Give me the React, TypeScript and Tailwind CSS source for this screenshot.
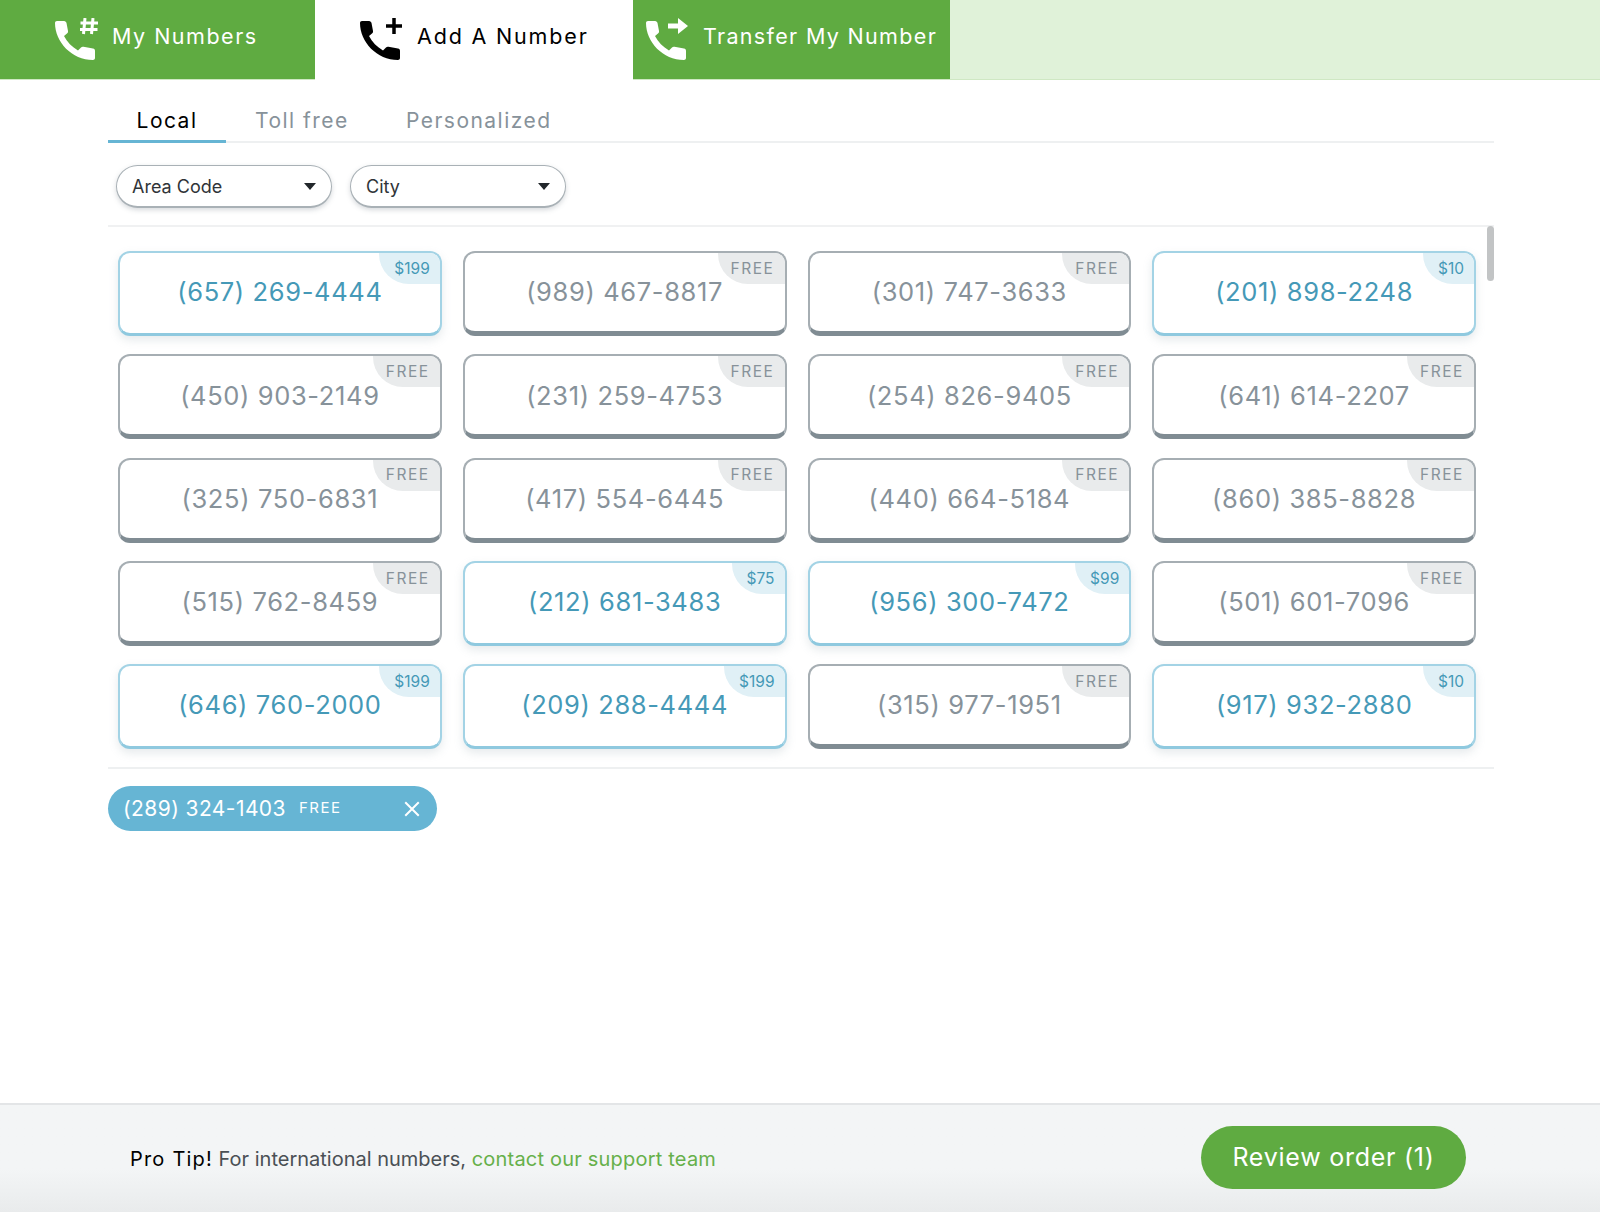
import React from "react";

// ============================================================================
// Data
// ============================================================================

type NumberItem = { phone: string; price: string };

const NUMBERS: NumberItem[] = [
    { phone: "(657) 269-4444", price: "$199" },
    { phone: "(989) 467-8817", price: "FREE" },
    { phone: "(301) 747-3633", price: "FREE" },
    { phone: "(201) 898-2248", price: "$10" },
    { phone: "(450) 903-2149", price: "FREE" },
    { phone: "(231) 259-4753", price: "FREE" },
    { phone: "(254) 826-9405", price: "FREE" },
    { phone: "(641) 614-2207", price: "FREE" },
    { phone: "(325) 750-6831", price: "FREE" },
    { phone: "(417) 554-6445", price: "FREE" },
    { phone: "(440) 664-5184", price: "FREE" },
    { phone: "(860) 385-8828", price: "FREE" },
    { phone: "(515) 762-8459", price: "FREE" },
    { phone: "(212) 681-3483", price: "$75" },
    { phone: "(956) 300-7472", price: "$99" },
    { phone: "(501) 601-7096", price: "FREE" },
    { phone: "(646) 760-2000", price: "$199" },
    { phone: "(209) 288-4444", price: "$199" },
    { phone: "(315) 977-1951", price: "FREE" },
    { phone: "(917) 932-2880", price: "$10" },
];

const HANDSET =
    "M2 3H9C10.500 3 11.200 4 11.500 5L13 13C13.200 14 12.800 15 12 15.600L9 18C12 24 17 29 23 32.500L26 29.500C26.800 28.800 27.500 28.500 28.500 28.800L38 30.500C39.300 30.800 40 31.600 40 33V40C40 41.300 39 42 38 42C17 42 0 24 0 5C0 3.800 .8 3 2 3Z";

// ============================================================================
// Components
// ============================================================================

function PhoneIcon({ kind }: { kind: "hash" | "plus" | "arrow" }): React.JSX.Element {
    return (
        <svg viewBox="0 0 44 44" className="w-[44px] h-[44px] fill-current shrink-0" aria-hidden="true">
            <path d={HANDSET} />
            {kind === "hash" && <path d="M30 0 28.500 16M38 0 36.500 16M25.500 5H43M25 11.500H42.500" stroke="currentColor" strokeWidth="3" fill="none" />}
            {kind === "plus" && <path d="M34 0V16M26 8H42" stroke="currentColor" strokeWidth="3.500" fill="none" />}
            {kind === "arrow" && <path d="M22 5.500H32V0L42 8 32 16V10.500H22Z" />}
        </svg>
    );
}

function TopTab({ label, kind, active, className }: { label: string; kind: "hash" | "plus" | "arrow"; active?: boolean; className: string }): React.JSX.Element {
    return (
        <div className={`flex items-center gap-[13px] text-[21.500px] ${active ? "h-[80px] bg-white text-black" : "h-[79px] bg-[#5fab41] text-white"} ${className}`}>
            <PhoneIcon kind={kind} />
            <span className={active ? "mt-[-7px]" : "mt-[-6px]"}>{label}</span>
        </div>
    );
}

function FilterSelect({ label }: { label: string }): React.JSX.Element {
    return (
        <div className="w-[216px] h-[43px] flex items-center justify-between px-[15px] rounded-full bg-white border border-[#a9b1b6] border-b-2 shadow-[0_2px_5px_rgba(120,130,140,0.3)] text-[18px] text-[#2f3438]">
            <span>{label}</span>
            <span className="w-0 h-0 border-x-[6px] border-x-transparent border-t-[7px] border-t-[#22272b]" />
        </div>
    );
}

function NumberCard({ phone, price }: NumberItem): React.JSX.Element {
    const free = price === "FREE";
    return (
        <div
            className={`relative h-[85px] rounded-[12px] bg-white border-2 overflow-hidden flex items-center justify-center ${
                free
                    ? "border-[#a6aeb3] border-b-[5px] border-b-[#808c93] text-[#87929a]"
                    : "border-[#a3d3e5] border-b-[3px] border-b-[#8fc9df] shadow-[0_4px_10px_rgba(130,150,160,0.2)] text-[#4599b7]"
            }`}
        >
            <span className={`text-[25.500px] tracking-[0.025em] leading-none ${free ? "mt-0" : "mt-[-2px]"}`}>{phone}</span>
            <span
                className={`absolute top-0 right-0 h-[31px] pr-[10px] flex items-center rounded-bl-[30px] text-[15.500px] ${
                    free ? "pl-[13px] bg-[#e9ebec] tracking-[0.1em]" : "pl-[15px] bg-[#e0f0f6]"
                }`}
            >
                {price}
            </span>
        </div>
    );
}

// ============================================================================
// App
// ============================================================================

export default function App(): React.JSX.Element {
    return (
        <div className="h-[1212px] flex flex-col bg-white overflow-hidden font-['Inter',sans-serif]">
            {/* Top navigation */}
            <div className="flex h-[80px] bg-[#e0f2d9] border-b border-b-[#cfe8c3] shrink-0">
                <TopTab label="My Numbers" kind="hash" className="w-[315px] pl-[55px] tracking-[0.07em]" />
                <TopTab label="Add A Number" kind="plus" active className="w-[318px] pl-[45px] tracking-[0.085em]" />
                <TopTab label="Transfer My Number" kind="arrow" className="w-[317px] pl-[13px] tracking-[0.062em]" />
            </div>

            <div className="mx-[108px] w-[1386px]">
                {/* Number type tabs */}
                <div className="flex h-[63px] items-end border-b-2 border-b-[#eef0f1] text-[21px] tracking-[0.07em] text-[#87929a]">
                    <div className="w-[118px] h-[41px] pt-[3px] mb-[-2px] text-center text-black border-b-[3px] border-b-[#66b5d4]">Local</div>
                    <div className="w-[151px] h-[41px] pt-[3px] mb-[-2px] pl-[29px]">Toll free</div>
                    <div className="h-[41px] pt-[3px] mb-[-2px] pl-[29px]">Personalized</div>
                </div>

                {/* Filters */}
                <div className="flex gap-[18px] h-[84px] pt-[22px] pl-[8px] border-b-2 border-b-[#f0f1f2]">
                    <FilterSelect label="Area Code" />
                    <FilterSelect label="City" />
                </div>

                {/* Number grid */}
                <div className="relative h-[542px] border-b-2 border-b-[#eef0f1] pt-[24px] pl-[10px]">
                    <div className="w-[1358px] grid grid-cols-4 gap-x-[21px] gap-y-[18.250px]">
                        {NUMBERS.map((n) => (
                            <NumberCard key={n.phone} {...n} />
                        ))}
                    </div>
                    <div className="absolute top-[-1px] right-0 w-[7px] h-[55px] rounded-full bg-[#c2c4c5]" />
                </div>

                {/* Selected number */}
                <div className="mt-[17px] w-[329px] h-[45px] rounded-full bg-[#66b5d4] text-white flex items-center pl-[15px] pr-[16px]">
                    <span className="text-[21px] tracking-[0.02em]">(289) 324-1403</span>
                    <span className="ml-[13px] text-[15px] tracking-[0.1em]">FREE</span>
                    <svg viewBox="0 0 16 16" className="ml-auto w-[18px] h-[18px]" stroke="currentColor" strokeWidth="1.800" fill="none">
                        <path d="M2 2l12 12M14 2 2 14" />
                    </svg>
                </div>
            </div>

            <div className="flex-1" />

            {/* Footer */}
            <div className="h-[109px] shrink-0 flex items-center justify-between pl-[130px] pr-[134px] border-t-2 border-t-[#e3e5e7] bg-gradient-to-b from-[#f3f5f6] from-60% to-[#e9ebec]">
                <div className="text-[20px] text-[#4a5055] mt-[1px]">
                    <span className="text-black tracking-[0.06em]">Pro Tip!</span> For international numbers,{" "}
                    <span className="text-[#66b04a] tracking-[0.01em]">contact our support team</span>
                </div>
                <div className="w-[265px] h-[63px] mt-[-2px] rounded-full bg-[#5fab41] text-white flex items-center justify-center text-[25px] tracking-[0.03em]">
                    Review order (1)
                </div>
            </div>
        </div>
    );
}
